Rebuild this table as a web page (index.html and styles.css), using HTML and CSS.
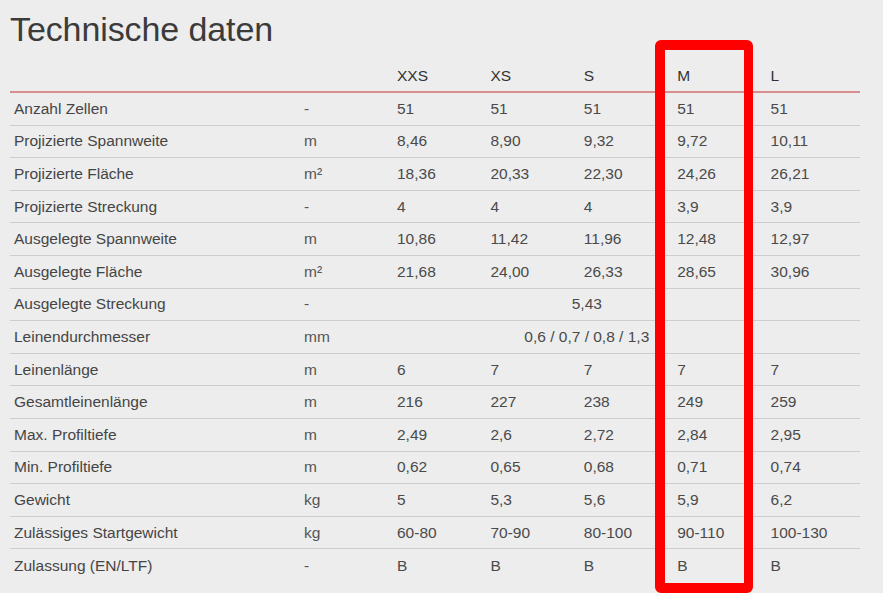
FILE: index.html
```html
<!DOCTYPE html>
<html lang="de">
<head>
<meta charset="utf-8">
<title>Technische daten</title>
<link rel="stylesheet" href="styles.css">
</head>
<body>
<div class="page">
  <h1 class="title">Technische daten</h1>
  <div class="table">
    <div class="row head">
      <div class="c label"></div><div class="c unit"></div>
      <div class="c">XXS</div><div class="c">XS</div><div class="c">S</div><div class="c">M</div><div class="c">L</div>
    </div>
    <div class="row"><div class="c label">Anzahl Zellen</div><div class="c unit">-</div><div class="c">51</div><div class="c">51</div><div class="c">51</div><div class="c">51</div><div class="c">51</div></div>
    <div class="row"><div class="c label">Projizierte Spannweite</div><div class="c unit">m</div><div class="c">8,46</div><div class="c">8,90</div><div class="c">9,32</div><div class="c">9,72</div><div class="c">10,11</div></div>
    <div class="row"><div class="c label">Projizierte Fläche</div><div class="c unit">m²</div><div class="c">18,36</div><div class="c">20,33</div><div class="c">22,30</div><div class="c">24,26</div><div class="c">26,21</div></div>
    <div class="row"><div class="c label">Projizierte Streckung</div><div class="c unit">-</div><div class="c">4</div><div class="c">4</div><div class="c">4</div><div class="c">3,9</div><div class="c">3,9</div></div>
    <div class="row"><div class="c label">Ausgelegte Spannweite</div><div class="c unit">m</div><div class="c">10,86</div><div class="c">11,42</div><div class="c">11,96</div><div class="c">12,48</div><div class="c">12,97</div></div>
    <div class="row"><div class="c label">Ausgelegte Fläche</div><div class="c unit">m²</div><div class="c">21,68</div><div class="c">24,00</div><div class="c">26,33</div><div class="c">28,65</div><div class="c">30,96</div></div>
    <div class="row"><div class="c label">Ausgelegte Streckung</div><div class="c unit">-</div><div class="c span">5,43</div></div>
    <div class="row"><div class="c label">Leinendurchmesser</div><div class="c unit">mm</div><div class="c span">0,6 / 0,7 / 0,8 / 1,3</div></div>
    <div class="row"><div class="c label">Leinenlänge</div><div class="c unit">m</div><div class="c">6</div><div class="c">7</div><div class="c">7</div><div class="c">7</div><div class="c">7</div></div>
    <div class="row"><div class="c label">Gesamtleinenlänge</div><div class="c unit">m</div><div class="c">216</div><div class="c">227</div><div class="c">238</div><div class="c">249</div><div class="c">259</div></div>
    <div class="row"><div class="c label">Max. Profiltiefe</div><div class="c unit">m</div><div class="c">2,49</div><div class="c">2,6</div><div class="c">2,72</div><div class="c">2,84</div><div class="c">2,95</div></div>
    <div class="row"><div class="c label">Min. Profiltiefe</div><div class="c unit">m</div><div class="c">0,62</div><div class="c">0,65</div><div class="c">0,68</div><div class="c">0,71</div><div class="c">0,74</div></div>
    <div class="row"><div class="c label">Gewicht</div><div class="c unit">kg</div><div class="c">5</div><div class="c">5,3</div><div class="c">5,6</div><div class="c">5,9</div><div class="c">6,2</div></div>
    <div class="row"><div class="c label">Zulässiges Startgewicht</div><div class="c unit">kg</div><div class="c">60-80</div><div class="c">70-90</div><div class="c">80-100</div><div class="c">90-110</div><div class="c">100-130</div></div>
    <div class="row last"><div class="c label">Zulassung (EN/LTF)</div><div class="c unit">-</div><div class="c">B</div><div class="c">B</div><div class="c">B</div><div class="c">B</div><div class="c">B</div></div>
  </div>
  <div class="highlight"></div>
</div>
</body>
</html>
```
FILE: styles.css
```css
html, body {
  margin: 0;
  padding: 0;
  background: #ffffff;
}
body {
  font-family: "Liberation Sans", Arial, sans-serif;
  color: #4a4a4a;
}
.page {
  position: relative;
  height: 593px;
  background: #ededed;
  padding: 0 23px 0 10px;
  overflow: hidden;
}
.title {
  margin: 0;
  padding-top: 11px;
  height: 60px;
  box-sizing: border-box;
  font-size: 34px;
  line-height: 36px;
  font-weight: normal;
  color: #3b3b3b;
  letter-spacing: -0.1px;
}
.table {
  width: 850px;
}
.row {
  display: grid;
  grid-template-columns: 290px 93px repeat(5, 1fr);
  height: 32.6px;
  box-sizing: border-box;
  border-bottom: 1px solid #cdcdcd;
  align-items: center;
  font-size: 15.5px;
}
.row.head {
  height: 33px;
  border-bottom: 2px solid #d68e8e;
  color: #333;
  padding-top: 1px;
}
.row.last {
  border-bottom: none;
}
.c {
  padding-left: 4px;
  white-space: nowrap;
}
.label {
  color: #454545;
}
.unit {
  color: #555;
}
.span {
  grid-column: 3 / 7;
  text-align: center;
  padding-left: 14px;
}
.highlight {
  position: absolute;
  left: 655px;
  top: 40px;
  width: 98px;
  height: 553px;
  box-sizing: border-box;
  border: 10px solid #ff0000;
  border-right-width: 9px;
  border-radius: 6px;
}
```
